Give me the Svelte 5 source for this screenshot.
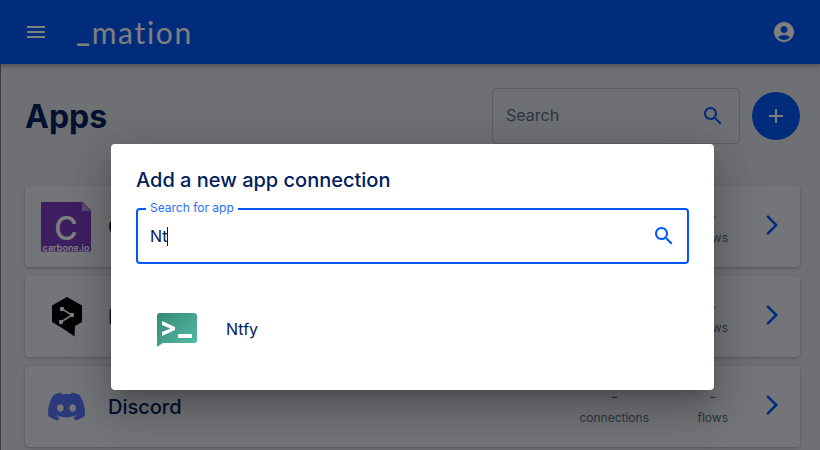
<script>
  const apps = [
    { name: 'Carbone', icon: 'carbone' },
    { name: 'DeepL', icon: 'deepl' },
    { name: 'Discord', icon: 'discord' }
  ];
</script>

<div class="page">
  <header class="appbar">
    <svg class="menu" viewBox="0 0 24 24" width="24" height="24"><path d="M3 18h18v-2H3v2zm0-5h18v-2H3v2zm0-7v2h18V6H3z" fill="currentColor" /></svg>
    <span class="logo"><span class="logo-bar">_</span>mation</span>
    <svg class="account" viewBox="0 0 24 24" width="24" height="24"><path d="M12 2C6.48 2 2 6.48 2 12s4.48 10 10 10 10-4.48 10-10S17.52 2 12 2zm0 4c1.93 0 3.5 1.57 3.5 3.5S13.93 13 12 13s-3.5-1.57-3.5-3.5S10.07 6 12 6zm0 14c-2.03 0-4.43-.82-6.14-2.88C7.55 15.8 9.68 15 12 15s4.45.8 6.14 2.12C16.43 19.18 14.03 20 12 20z" fill="currentColor" /></svg>
  </header>

  <main class="content">
    <div class="top">
      <h1>Apps</h1>
      <div class="search">
        <span>Search</span>
        <svg viewBox="0 0 24 24" width="24" height="24"><path d="M15.5 14h-.79l-.28-.27C15.41 12.59 16 11.11 16 9.5 16 5.91 13.09 3 9.5 3S3 5.91 3 9.5 5.91 16 9.5 16c1.61 0 3.09-.59 4.23-1.57l.27.28v.79l5 4.99L20.49 19l-4.99-5zm-6 0C7.01 14 5 11.99 5 9.5S7.01 5 9.5 5 14 7.01 14 9.5 11.99 14 9.5 14z" fill="currentColor" /></svg>
      </div>
      <div class="fab">
        <svg viewBox="0 0 24 24" width="24" height="24"><path d="M19 13h-6v6h-2v-6H5v-2h6V5h2v6h6v2z" fill="currentColor" /></svg>
      </div>
    </div>

    <div class="cards">
      {#each apps as app}
        <div class="card">
          <div class="card-icon">
            {#if app.icon === 'carbone'}
              <div class="carbone">
                <span class="carbone-c">C</span>
                <span class="carbone-name">carbone.io</span>
              </div>
            {:else if app.icon === 'deepl'}
              <svg viewBox="0 0 32 40" width="32" height="40">
                <path d="M16 0 31 8.500V25L24 29 23.500 39.500 15 33.500 1 25V8.500Z" fill="#04060b" />
                <path d="M11 12 21 18 10 25" stroke="#fff" stroke-width="1.500" fill="none" />
                <circle cx="11" cy="12" r="2.200" fill="#fff" />
                <circle cx="21" cy="18" r="2.200" fill="#fff" />
                <circle cx="10" cy="25" r="2.200" fill="#fff" />
              </svg>
            {:else}
              <svg viewBox="0 0 24 24" width="37" height="37"><path d="M20.317 4.3698a19.7913 19.7913 0 00-4.8851-1.5152.0741.0741 0 00-.0785.0371c-.211.3753-.4447.8648-.6083 1.2495-1.8447-.2762-3.68-.2762-5.4868 0-.1636-.3933-.4058-.8742-.6177-1.2495a.077.077 0 00-.0785-.037 19.7363 19.7363 0 00-4.8852 1.515.0699.0699 0 00-.0321.0277C.5334 9.0458-.319 13.5799.0992 18.0578a.0824.0824 0 00.0312.0561c2.0528 1.5076 4.0413 2.4228 5.9929 3.0294a.0777.0777 0 00.0842-.0276c.4616-.6304.8731-1.2952 1.226-1.9942a.076.076 0 00-.0416-.1057c-.6528-.2476-1.2743-.5495-1.8722-.8923a.077.077 0 01-.0076-.1277c.1258-.0943.2517-.1923.3718-.2914a.0743.0743 0 01.0776-.0105c3.9278 1.7933 8.18 1.7933 12.0614 0a.0739.0739 0 01.0785.0095c.1202.099.246.1981.3728.2924a.077.077 0 01-.0066.1276 12.2986 12.2986 0 01-1.873.8914.0766.0766 0 00-.0407.1067c.3604.698.7719 1.3628 1.225 1.9932a.076.076 0 00.0842.0286c1.961-.6067 3.9495-1.5219 6.0023-3.0294a.077.077 0 00.0313-.0552c.5004-5.177-.8382-9.6739-3.5485-13.6604a.061.061 0 00-.0312-.0286zM8.02 15.3312c-1.1825 0-2.1569-1.0857-2.1569-2.419 0-1.3332.9555-2.4189 2.157-2.4189 1.2108 0 2.1757 1.0952 2.1568 2.419 0 1.3332-.9555 2.4189-2.1569 2.4189zm7.9748 0c-1.1825 0-2.1569-1.0857-2.1569-2.419 0-1.3332.9554-2.4189 2.1569-2.4189 1.2108 0 2.1757 1.0952 2.1568 2.419 0 1.3332-.946 2.4189-2.1568 2.4189Z" fill="#5874f8" /></svg>
            {/if}
          </div>
          <span class="card-name">{app.name}</span>
          <div class="stat stat-conn"><span>-</span><small>connections</small></div>
          <div class="stat stat-flows"><span>-</span><small>flows</small></div>
          <svg class="chevron" viewBox="0 0 24 24" width="24" height="24"><path d="M6.230 20.230 8 22l10-10L8 2 6.230 3.770 14.460 12z" fill="currentColor" /></svg>
        </div>
      {/each}
    </div>
  </main>

  <div class="backdrop"></div>

  <div class="dialog" role="dialog">
    <h2>Add a new app connection</h2>
    <div class="field">
      <span class="field-label">Search for app</span>
      <div class="value">Nt<i class="caret"></i></div>
      <svg viewBox="0 0 24 24" width="24" height="24"><path d="M15.5 14h-.79l-.28-.27C15.41 12.59 16 11.11 16 9.5 16 5.91 13.09 3 9.5 3S3 5.91 3 9.5 5.91 16 9.5 16c1.61 0 3.09-.59 4.23-1.57l.27.28v.79l5 4.99L20.49 19l-4.99-5zm-6 0C7.01 14 5 11.99 5 9.5S7.01 5 9.5 5 14 7.01 14 9.5 11.99 14 9.5 14z" fill="currentColor" /></svg>
    </div>
    <div class="result">
      <svg viewBox="0 0 40 34" width="40" height="34">
        <defs>
          <linearGradient id="ntfy" x1="0" y1="0" x2="1" y2="1">
            <stop offset="0" stop-color="#348878" />
            <stop offset="1" stop-color="#56bda5" />
          </linearGradient>
        </defs>
        <path d="M3 0H37A3 3 0 0 1 40 3V27A3 3 0 0 1 37 30H6L0 34V3A3 3 0 0 1 3 0Z" fill="url(#ntfy)" />
        <path d="M5 8 18 14V17L5 23V19L13.500 15.500 5 12Z" fill="#fff" />
        <rect x="21" y="21" width="14" height="4" rx="0.500" fill="#fff" />
      </svg>
      <span>Ntfy</span>
    </div>
  </div>
</div>

<style>
  :global(body) {
    margin: 0;
  }

  .page {
    position: relative;
    width: 820px;
    height: 450px;
    overflow: hidden;
    background: #dce1e9;
    font-family: Inter, sans-serif;
    color: #062263;
  }

  .appbar {
    height: 64px;
    box-sizing: border-box;
    display: flex;
    align-items: center;
    padding: 0 24px;
    background: #0059f7;
    color: #fff;
    box-shadow: 0 2px 4px rgba(0, 0, 0, 0.3);
    position: relative;
  }

  .logo {
    margin-left: 28px;
    font-family: Lato, sans-serif;
    font-weight: 400;
    font-size: 30px;
    letter-spacing: 1.7px;
    line-height: 1;
    color: #fff;
  }

  .logo-bar {
    display: inline-block;
    font-weight: 700;
    transform: translateY(-3px);
  }

  .account {
    margin-left: auto;
  }

  .content {
    padding: 24px 20px 0 24px;
    border-left: 1px solid #7d7d7d;
    height: 386px;
  }

  .top {
    display: flex;
    align-items: center;
    height: 56px;
    margin-bottom: 42px;
  }

  h1 {
    margin: 0 auto 0 0;
    font-size: 32px;
    font-weight: 700;
    line-height: 1;
    position: relative;
    top: 1px;
  }

  .search {
    width: 248px;
    height: 56px;
    box-sizing: border-box;
    display: flex;
    align-items: center;
    justify-content: space-between;
    padding: 0 14px 0 13px;
    border: 1px solid #b6bcc6;
    border-radius: 4px;
    font-size: 16px;
    color: #5a6a85;
  }

  .search span {
    margin-bottom: 2px;
  }

  .search svg {
    color: #0059f7;
  }

  .fab {
    width: 48px;
    height: 48px;
    margin-left: 12px;
    border-radius: 50%;
    background: #0059f7;
    color: #fff;
    display: flex;
    align-items: center;
    justify-content: center;
  }

  .cards {
    display: flex;
    flex-direction: column;
    gap: 9px;
  }

  .card {
    height: 81px;
    display: flex;
    align-items: center;
    background: #e8ebf0;
    border-radius: 4px;
    box-shadow: 0 1px 3px rgba(0, 0, 0, 0.25);
    position: relative;
  }

  .card-icon {
    width: 83px;
    display: flex;
    justify-content: center;
    align-items: center;
  }

  .carbone {
    width: 50px;
    height: 50px;
    margin-left: -1px;
    background: #7a3cc0;
    clip-path: polygon(0 0, 82% 0, 100% 18%, 100% 100%, 0 100%);
    display: flex;
    flex-direction: column;
    align-items: center;
    color: #fff;
    position: relative;
  }

  .carbone::after {
    content: '';
    position: absolute;
    top: 0;
    right: 0;
    width: 9px;
    height: 9px;
    background: linear-gradient(to top right, #b49ad6 50%, transparent 50%);
  }

  .carbone-c {
    font-size: 32px;
    font-weight: 500;
    line-height: 25px;
    margin-top: 14px;
  }

  .carbone-name {
    font-size: 9px;
    font-weight: 600;
    line-height: 9px;
    margin-top: 2px;
    white-space: nowrap;
  }

  .card-name {
    font-size: 20px;
    font-weight: 500;
  }

  .stat {
    display: flex;
    flex-direction: column;
    align-items: center;
    gap: 5px;
    color: #5a6a85;
    position: absolute;
    top: 21px;
  }

  .stat span {
    font-size: 16px;
    line-height: 18px;
  }

  .stat small {
    font-size: 12px;
    line-height: 16px;
  }

  .stat-conn {
    right: 151px;
  }

  .stat-flows {
    right: 72px;
  }

  .chevron {
    position: absolute;
    right: 16px;
    top: 27px;
    color: #0059f7;
  }

  .backdrop {
    position: absolute;
    inset: 0;
    background: rgba(0, 0, 0, 0.5);
  }

  .dialog {
    position: absolute;
    left: 111px;
    top: 144px;
    width: 603px;
    height: 246px;
    box-sizing: border-box;
    padding: 24px 25px;
    background: #fff;
    border-radius: 4px;
    color: #00205c;
    box-shadow: 0 11px 15px -7px rgba(0, 0, 0, 0.2), 0 24px 38px 3px rgba(0, 0, 0, 0.14), 0 9px 46px 8px rgba(0, 0, 0, 0.12);
  }

  h2 {
    margin: 0;
    font-size: 20px;
    font-weight: 500;
    line-height: 24px;
  }

  .field {
    position: relative;
    box-sizing: border-box;
    height: 56px;
    margin-top: 16px;
    display: flex;
    align-items: center;
    justify-content: space-between;
    padding: 0 11px 0 12px;
    border: 2px solid #0059f7;
    border-radius: 4px;
    color: #0059f7;
  }

  .field-label {
    position: absolute;
    left: 8px;
    top: -8px;
    padding: 0 4px;
    background: #fff;
    font-size: 12px;
    line-height: 12px;
    color: #2a6ef7;
  }

  .value {
    font-size: 16px;
    color: #00205c;
    margin-bottom: 1px;
  }

  .caret {
    display: inline-block;
    width: 1px;
    height: 19px;
    margin-left: -1px;
    background: #001f52;
    vertical-align: -4px;
  }

  .result {
    display: flex;
    align-items: center;
    gap: 29px;
    margin: 49px 0 0 21px;
    font-size: 16px;
  }

  .result span {
    margin-bottom: 2px;
  }
</style>
